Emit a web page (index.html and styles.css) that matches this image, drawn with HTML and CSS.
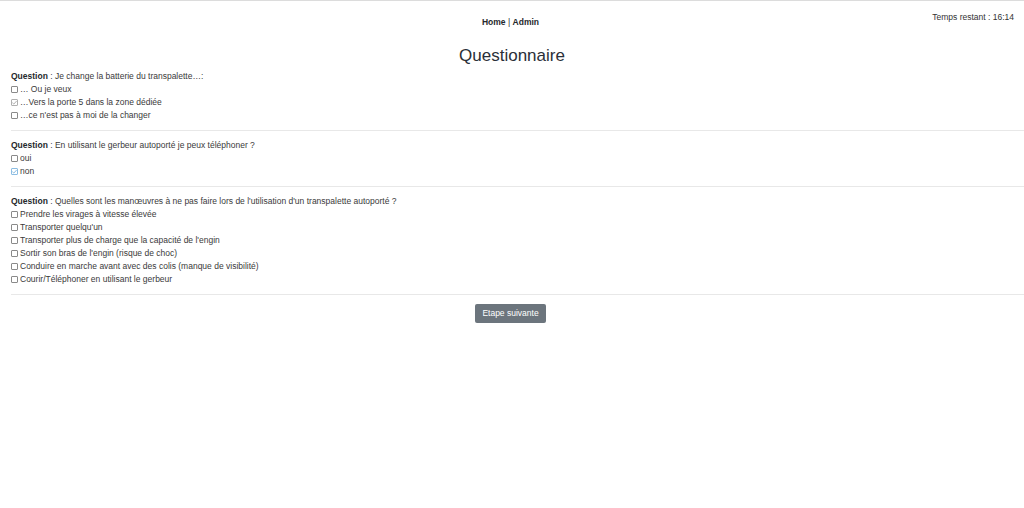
FILE: index.html
```html
<!DOCTYPE html>
<html lang="fr">
<head>
<meta charset="utf-8">
<title>Questionnaire</title>
<link rel="stylesheet" href="styles.css">
</head>
<body>
<div class="page">
  <header class="header">
    <div></div>
    <nav class="nav"><a class="nav-link" href="#">Home</a> | <a class="nav-link" href="#">Admin</a></nav>
    <div class="timer">Temps restant : 16:14</div>
  </header>
  <h3 class="title">Questionnaire</h3>

  <section class="question">
    <div><b>Question</b> : Je change la batterie du transpalette…:</div>
    <div class="opt"><span class="cb"></span>… Ou je veux</div>
    <div class="opt"><span class="cb cb-grey"><svg viewBox="0 0 8 8"><path d="M1.5 4.2 L3.2 5.8 L6.5 2.2" fill="none" stroke="#9a9a9a" stroke-width="0.9"/></svg></span>…Vers la porte 5 dans la zone dédiée</div>
    <div class="opt"><span class="cb"></span>…ce n'est pas à moi de la changer</div>
  </section>
  <hr class="sep">
  <section class="question">
    <div><b>Question</b> : En utilisant le gerbeur autoporté je peux téléphoner ?</div>
    <div class="opt"><span class="cb"></span>oui</div>
    <div class="opt"><span class="cb cb-blue"><svg viewBox="0 0 8 8"><path d="M1.5 4.2 L3.2 5.8 L6.5 2.2" fill="none" stroke="#6aa9d8" stroke-width="0.9"/></svg></span>non</div>
  </section>
  <hr class="sep">
  <section class="question">
    <div><b>Question</b> : Quelles sont les manœuvres à ne pas faire lors de l'utilisation d'un transpalette autoporté ?</div>
    <div class="opt"><span class="cb"></span>Prendre les virages à vitesse élevée</div>
    <div class="opt"><span class="cb"></span>Transporter quelqu'un</div>
    <div class="opt"><span class="cb"></span>Transporter plus de charge que la capacité de l'engin</div>
    <div class="opt"><span class="cb"></span>Sortir son bras de l'engin (risque de choc)</div>
    <div class="opt"><span class="cb"></span>Conduire en marche avant avec des colis (manque de visibilité)</div>
    <div class="opt"><span class="cb"></span>Courir/Téléphoner en utilisant le gerbeur</div>
  </section>
  <hr class="sep">
  <div class="actions"><button class="btn" type="button">Etape suivante</button></div>
</div>
</body>
</html>
```
FILE: styles.css
```css
html, body {
  margin: 0;
  padding: 0;
  background: #fff;
}
body {
  border-top: 1px solid #dcdcdc;
  font-family: "Liberation Sans", Arial, sans-serif;
  font-size: 8.5px;
  line-height: 13px;
  color: #2a2d31;
}
.page {
  padding-left: 11px;
}
.header {
  display: grid;
  grid-template-columns: 1fr auto 1fr;
  padding-top: 9.5px;
  margin-left: -11px;
  padding-right: 3px;
}
.nav {
  margin-top: 5.5px;
}
.nav-link {
  color: #25282c;
  font-weight: bold;
  text-decoration: none;
}
.timer {
  justify-self: end;
  margin-right: 7px;
  color: #333;
}
.title {
  margin: 16.5px 0 4.5px -11px;
  font-size: 17px;
  line-height: 20px;
  font-weight: normal;
  text-align: center;
  color: #2a2f38;
}
.question {
  color: #3a3a3a;
}
.question b {
  color: #25282c;
}
.opt {
  display: flex;
  align-items: center;
}
.cb {
  display: inline-block;
  box-sizing: border-box;
  width: 7px;
  height: 7px;
  border: 1px solid #8a8a8a;
  border-radius: 1px;
  margin-right: 2px;
  background: #fff;
  position: relative;
}
.cb svg {
  position: absolute;
  left: -1px;
  top: -1px;
  width: 7px;
  height: 7px;
}
.cb-grey {
  border-color: #b0b0b0;
}
.cb-blue {
  border-color: #8cbde3;
}
.sep {
  margin: 8px 0;
  border: 0;
  border-top: 1px solid #e8e8e8;
  height: 0;
}
.actions {
  display: flex;
  justify-content: center;
  padding-top: 0.5px;
  margin-left: -11px;
  padding-right: 3px;
}
.btn {
  width: 71px;
  height: 19px;
  padding: 0;
  border: 0;
  border-radius: 2px;
  background: #6c757d;
  color: #fff;
  font-family: "Liberation Sans", Arial, sans-serif;
  font-size: 8.5px;
}
```
